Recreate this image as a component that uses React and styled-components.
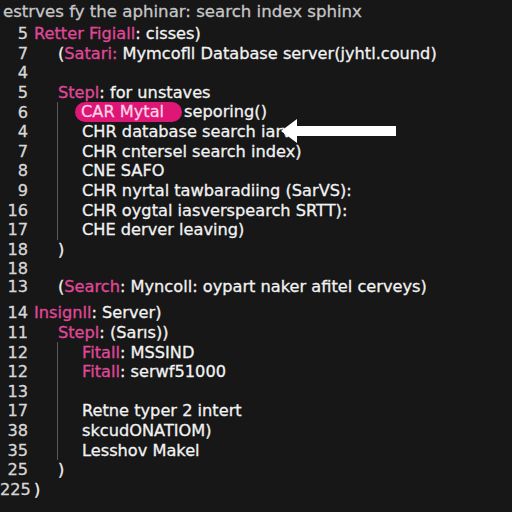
import React from "react";
import styled, { createGlobalStyle } from "styled-components";

const GlobalStyle = createGlobalStyle`
  html, body {
    margin: 0;
    padding: 0;
    background: #171717;
  }
  body {
    font-family: "DejaVu Sans", "Noto Sans", sans-serif;
  }
`;

const Editor = styled.div`
  position: relative;
  width: 512px;
  height: 512px;
  background: #171717;
  overflow: hidden;
  color: #f2f2f2;
  font-size: 16.2px;
  -webkit-text-stroke: 0.3px currentColor;
`;

const Title = styled.div`
  height: 24px;
  line-height: 24px;
  padding-left: 3px;
  color: #c6c6c6;
  font-size: 16.6px;
  white-space: nowrap;
`;

const Row = styled.div`
  position: relative;
  display: flex;
  align-items: center;
  height: ${(p) => p.$h || 19.6}px;
  margin-top: ${(p) => p.$gap || 0}px;
  white-space: nowrap;

  &::before {
    content: "";
    display: ${(p) => (p.$guide ? "block" : "none")};
    position: absolute;
    left: 57px;
    top: 0;
    bottom: 0;
    width: 1px;
    background: #5a5a5a;
  }
`;

const Num = styled.span`
  width: 28px;
  text-align: right;
  color: #d6d6d6;
  flex-shrink: 0;
`;

const Code = styled.span`
  padding-left: ${(p) => 6 + p.$indent * 24}px;
`;

const Kw = styled.span`
  color: #e0489a;
`;

const Pill = styled.span`
  display: inline-block;
  background: #de1675;
  color: #fbd3e6;
  border-radius: 10px;
  padding: 0 18px 0 6px;
  margin-left: -7px;
  margin-right: 2px;
  line-height: 20px;
`;

const Arrow = styled.svg`
  position: absolute;
  left: 281px;
  top: 118px;
`;

const lines = [
  { n: "5", i: 0, c: <><Kw>Retter Figiall</Kw>: cisses)</> },
  { n: "7", i: 1, c: <>(<Kw>Satari:</Kw> Mymcofll Database server(jyhtl.cound)</> },
  { n: "4", i: 1, c: null },
  { n: "5", i: 1, c: <><Kw>Stepl</Kw>: for unstaves</> },
  { n: "6", i: 2, g: true, c: <><Pill>CAR Mytal</Pill>seporing()</> },
  { n: "4", i: 2, g: true, c: "CHR database search iarv" },
  { n: "7", i: 2, g: true, c: "CHR cntersel search index)" },
  { n: "8", i: 2, g: true, c: "CNE SAFO" },
  { n: "9", i: 2, g: true, c: "CHR nyrtal tawbaradiing (SarVS):" },
  { n: "16", i: 2, g: true, c: "CHR oygtal iasverspearch SRTT):" },
  { n: "17", i: 2, g: true, c: "CHE derver leaving)" },
  { n: "18", i: 1, c: ")" },
  { n: "18", i: 1, h: 18, c: null },
  { n: "13", i: 1, h: 18, c: <>(<Kw>Search</Kw>: Myncoll: oypart naker afitel cerveys)</> },
  { n: "14", i: 0, gap: 8, c: <><Kw>Insignll</Kw>: Server)</> },
  { n: "11", i: 1, c: <><Kw>Stepl</Kw>: (Sarıs))</> },
  { n: "12", i: 2, g: true, c: <><Kw>Fitall</Kw>: MSSIND</> },
  { n: "12", i: 2, g: true, c: <><Kw>Fitall</Kw>: serwf51000</> },
  { n: "13", i: 2, g: true, c: null },
  { n: "17", i: 2, g: true, c: "Retne typer 2 intert" },
  { n: "38", i: 2, g: true, c: "skcudONATIOM)" },
  { n: "35", i: 2, g: true, c: "Lesshov Makel" },
  { n: "25", i: 1, c: ")" },
  { n: "225", i: 0, c: ")" },
];

export default function App() {
  return (
    <>
      <GlobalStyle />
      <Editor>
        <Title>estrves fy the aphinar: search index sphinx</Title>
        {lines.map((l, k) => (
          <Row key={k} $guide={l.g} $h={l.h} $gap={l.gap}>
            <Num>{l.n}</Num>
            <Code $indent={l.i}>{l.c}</Code>
          </Row>
        ))}
        <Arrow width="116" height="26" viewBox="0 0 116 26">
          <path d="M0 13 L16 1 L16 8 L115 8 L115 18 L16 18 L16 25 Z" fill="#ffffff" />
        </Arrow>
      </Editor>
    </>
  );
}
